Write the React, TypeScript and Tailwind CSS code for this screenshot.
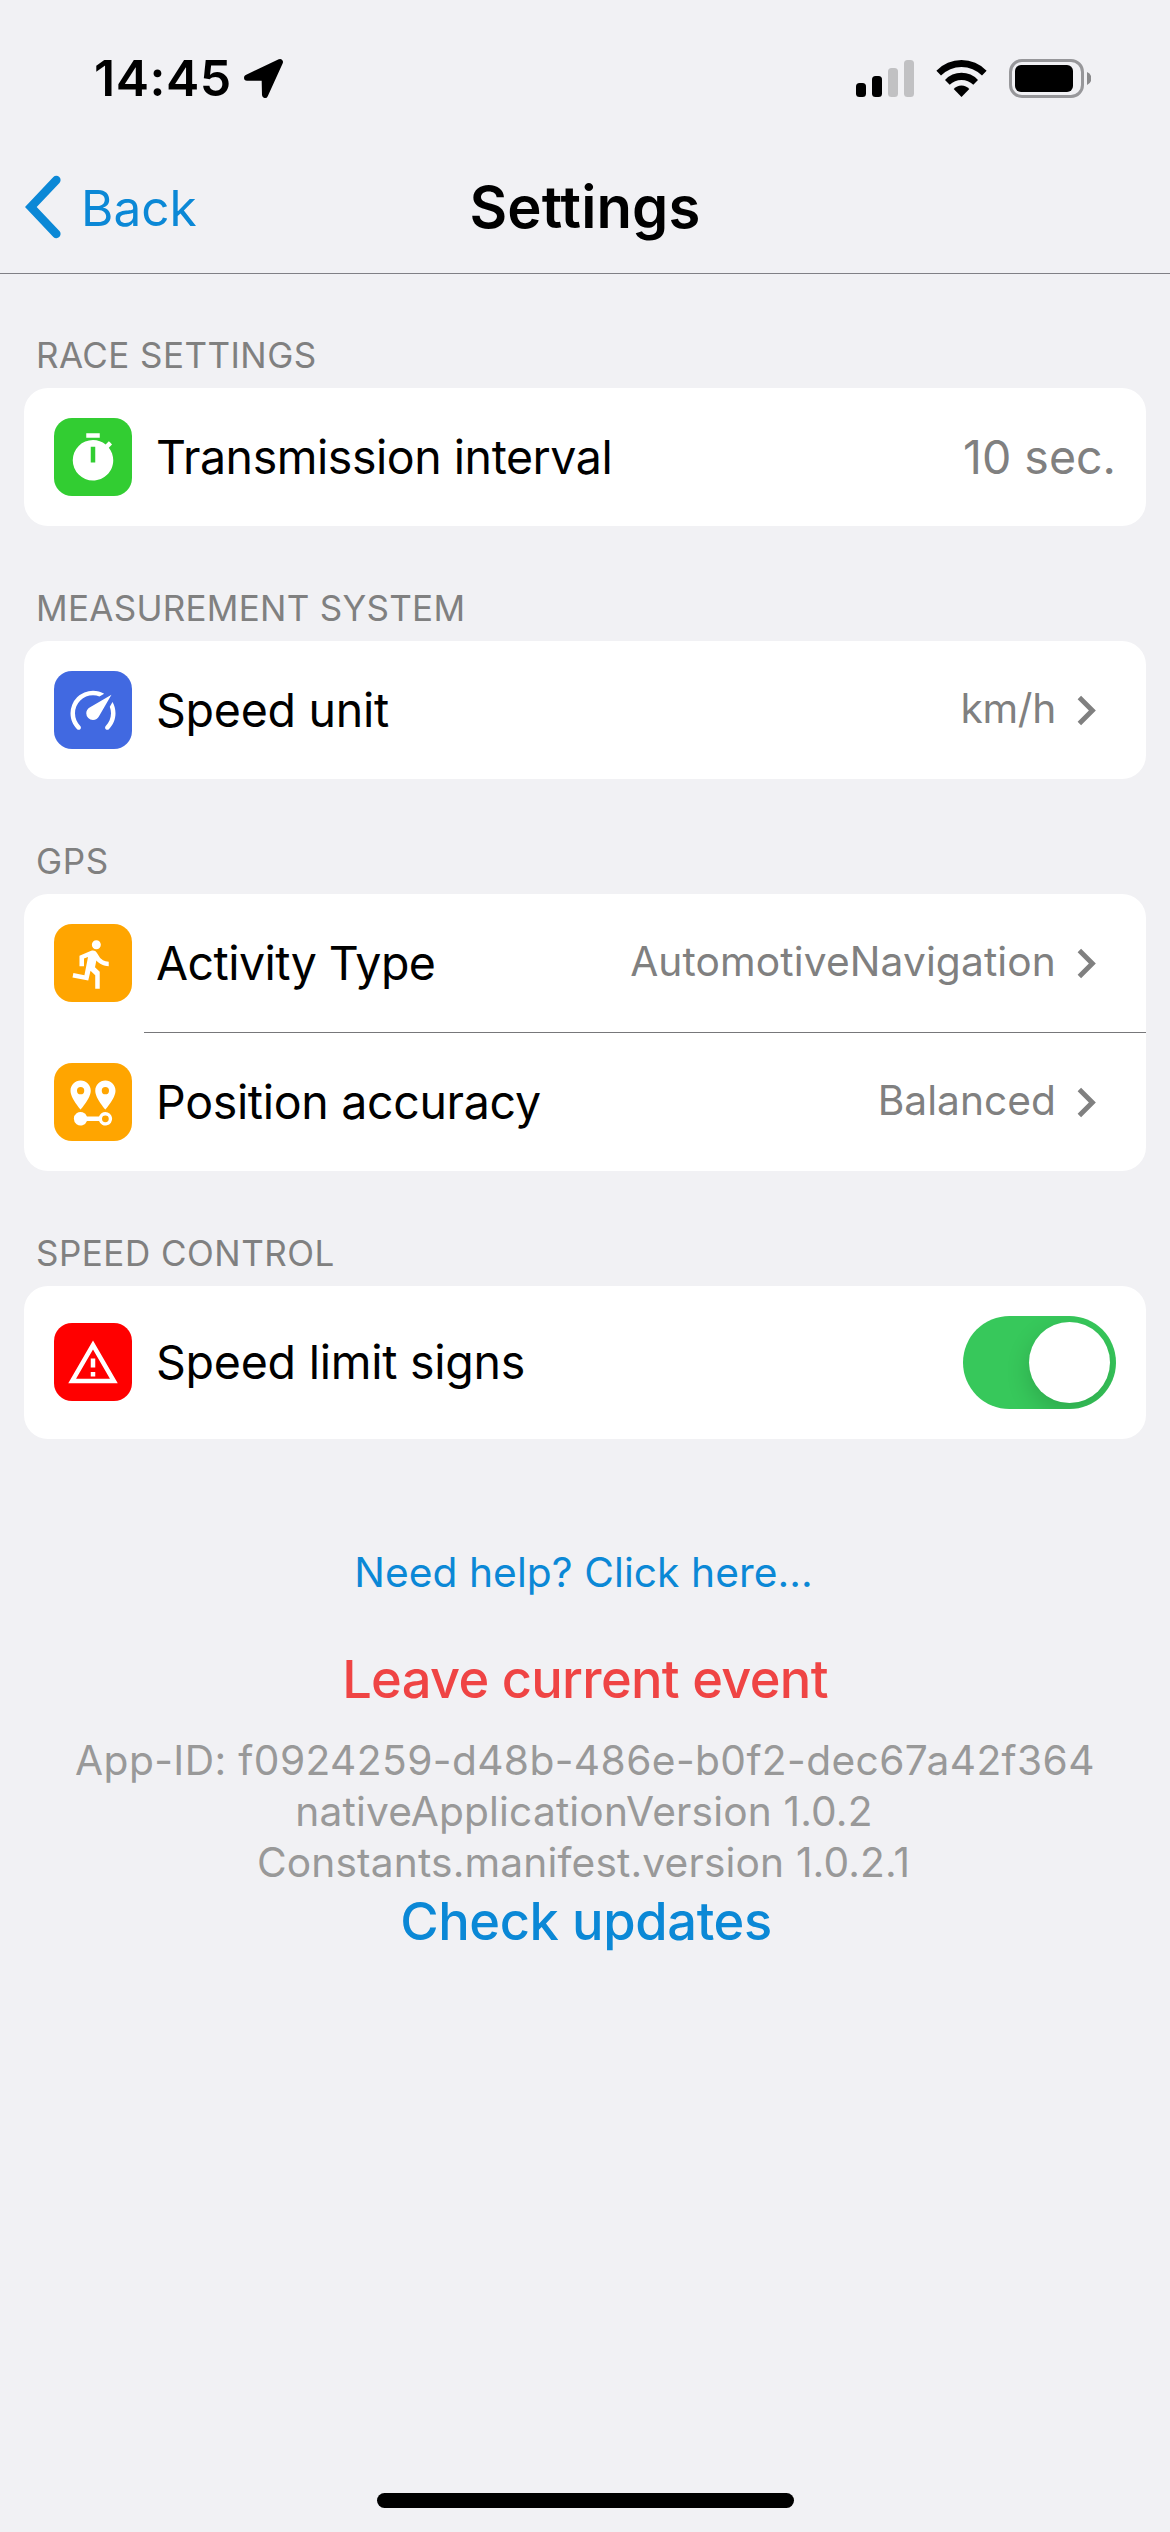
import React, { useState } from 'react';

const ICONS = {
  timer:
    'M19.03,7.39L20.45,5.97C20,5.46 19.55,5 19.04,4.56L17.62,6C16.07,4.74 14.12,4 12,4A9,9 0 0,0 3,13A9,9 0 0,0 12,22C17,22 21,17.97 21,13C21,10.88 20.26,8.93 19.03,7.39M13,14H11V7H13M15,1H9V3H15V1Z',
  speedometer:
    'M12,16A3,3 0 0,1 9,13C9,11.88 9.61,10.9 10.5,10.39L20.21,4.77L14.68,14.35C14.18,15.33 13.17,16 12,16M12,3C13.81,3 15.5,3.5 16.97,4.32L14.87,5.53C14,5.19 13,5 12,5A8,8 0 0,0 4,13C4,15.21 4.89,17.21 6.34,18.65H6.35C6.74,19.04 6.74,19.67 6.35,20.06C5.96,20.45 5.32,20.45 4.93,20.07V20.07C3.12,18.26 2,15.76 2,13A10,10 0 0,1 12,3M22,13C22,15.76 20.88,18.26 19.07,20.07V20.07C18.68,20.45 18.05,20.45 17.66,20.06C17.27,19.67 17.27,19.04 17.66,18.65V18.65C19.11,17.2 20,15.21 20,13C20,12 19.81,11 19.46,10.1L20.67,8C21.5,9.5 22,11.18 22,13Z',
  run: 'M13.49,5.48C14.59,5.48 15.49,4.58 15.49,3.48C15.49,2.38 14.59,1.48 13.49,1.48C12.39,1.48 11.49,2.38 11.49,3.48C11.49,4.58 12.39,5.48 13.49,5.48M9.89,19.38L10.89,14.98L12.99,16.98V22.98H14.99V15.48L12.89,13.48L13.49,10.48C14.79,11.98 16.79,12.98 18.99,12.98V10.98C17.09,10.98 15.49,9.98 14.69,8.58L13.69,6.98C13.29,6.38 12.69,5.98 11.99,5.98C11.69,5.98 11.49,6.08 11.19,6.08L5.99,8.28V12.98H7.99V9.58L9.79,8.88L8.19,16.98L3.29,15.98L2.89,17.98L9.89,19.38Z',
  distance:
    'M6.5,8.11A1.61,1.61 0 1,1 6.5,4.89A1.61,1.61 0 1,1 6.5,8.11M6.5,2C4,2 2,4 2,6.5C2,9.87 6.5,14.86 6.5,14.86C6.5,14.86 11,9.87 11,6.5C11,4 9,2 6.5,2M17.5,8.11A1.61,1.61 0 1,1 17.5,4.89A1.61,1.61 0 1,1 17.5,8.11M17.5,2C15,2 13,4 13,6.5C13,9.87 17.5,14.86 17.5,14.86C17.5,14.86 22,9.87 22,6.5C22,4 20,2 17.5,2M17.5,16C16.23,16 15.1,16.8 14.68,18H9.32A3,3 0 1,0 9.32,20H14.68A3,3 0 1,0 17.5,16M17.5,20.5A1.5,1.5 0 1,1 17.5,17.5A1.5,1.5 0 1,1 17.5,20.5Z',
  warning:
    'M12,2L1,21H23M12,6L19.53,19H4.47M11,10V14H13V10M11,16V18H13V16',
};

function Tile({ icon, color }: { icon: keyof typeof ICONS; color: string }) {
  return (
    <span className={`flex size-[78px] shrink-0 items-center justify-center rounded-[18px] pt-px ${color}`}>
      <svg viewBox="0 0 24 24" className="size-[54px]" fill="#fff" fillRule="evenodd">
        <path d={ICONS[icon]} />
      </svg>
    </span>
  );
}

function Row({
  icon,
  color,
  label,
  spacing,
  height = 'h-[138px]',
  children,
}: {
  icon: keyof typeof ICONS;
  color: string;
  label: string;
  spacing: string;
  height?: string;
  children: React.ReactNode;
}) {
  return (
    <div className={`flex items-center pr-[30px] pl-[30px] ${height}`}>
      <Tile icon={icon} color={color} />
      <span className={`ml-6 flex-1 text-[46.5px] leading-[60px] whitespace-nowrap text-black ${spacing}`}>{label}</span>
      {children}
    </div>
  );
}

function Link({ value, spacing }: { value: string; spacing: string }) {
  return (
    <span className="flex items-center text-[#808080]">
      <span className={`pb-[2px] text-[40.7px] leading-[50px] whitespace-nowrap ${spacing}`}>{value}</span>
      <svg viewBox="0 0 24 24" className="size-[60px] pt-px" fill="currentColor">
        <path d="M8.59,16.58L13.17,12L8.59,7.41L10,6L16,12L10,18L8.59,16.58Z" />
      </svg>
    </span>
  );
}

function Section({ title, spacing, children }: { title: string; spacing: string; children: React.ReactNode }) {
  return (
    <section className="mt-16 px-6">
      <h2 className={`pl-3 text-[35px] leading-9 text-[#808080] ${spacing}`}>{title}</h2>
      <div className="mt-[15px] overflow-hidden rounded-[24px] bg-white">{children}</div>
    </section>
  );
}

function StatusBar() {
  return (
    <div className="flex h-[141px] items-center justify-between pt-[15px] pr-[79px] pl-[94px]">
      <div className="flex items-center">
        <span className="text-[50px] leading-[60px] font-semibold tracking-[0.5px]">14:45</span>
        <svg viewBox="0 0 39 39" className="ml-[12px] h-[39px] w-[39px] overflow-visible">
          <path d="M3 18.7 36 3 21 36 20.6 18.7Z" stroke="#000" strokeWidth="6" strokeLinejoin="round" />
        </svg>
      </div>
      <div className="flex items-center">
        <div className="flex h-[37px] items-end gap-[6px]">
          <i className="h-[14px] w-[10px] rounded-[3.5px] bg-black" />
          <i className="h-[21px] w-[10px] rounded-[3.5px] bg-black" />
          <i className="h-[29px] w-[10px] rounded-[3.5px] bg-[#c1c1c3]" />
          <i className="h-[37px] w-[10px] rounded-[3.5px] bg-[#c1c1c3]" />
        </div>
        <svg viewBox="0 0 51 39" className="ml-[22px] h-[39px] w-[51px]">
          <path d="M.4 11.7A34.8 34.8 0 0 1 50.6 11.7L46 16.6A29 29 0 0 0 5 16.6Z" />
          <path d="M9 21A22.3 22.3 0 0 1 42 21L37.3 25.8A17.2 17.2 0 0 0 13.7 25.8Z" />
          <path d="M17.7 30A10.4 10.4 0 0 1 33.3 30L25.5 38Z" />
        </svg>
        <div className="ml-[22px] flex h-[39px] w-[75px] rounded-[13px] border-[3px] border-[#97979a] p-[3px]">
          <div className="w-[58px] rounded-[6px] bg-black" />
        </div>
        <svg viewBox="0 0 4 13" className="ml-[3px] h-[13px] w-1" fill="#8a8a8c">
          <path d="M0 0A7 7 0 0 1 0 13Z" />
        </svg>
      </div>
    </div>
  );
}

export default function App() {
  const [signs, setSigns] = useState(true);
  return (
    <div className="flex h-[2532px] w-[1170px] flex-col overflow-hidden bg-[#f1f1f4] font-[Inter,sans-serif] text-black">
      <StatusBar />
      <header className="-mb-px grid h-[133px] grid-cols-[1fr_auto_1fr] items-center border-b border-[#808085]">
        <a className="flex items-center pl-6 text-[#0b88d6]">
          <svg viewBox="0 0 38 64" className="h-16 w-[38px]" fill="none" stroke="currentColor" strokeWidth="8.4">
            <path d="M32.4 5 6.8 32 32.4 59" strokeLinecap="round" />
          </svg>
          <span className="ml-[19px] pt-[2px] text-[49.5px] leading-[60px]">Back</span>
        </a>
        <h1 className="text-[58px] leading-[70px] font-semibold tracking-[0.13px]">Settings</h1>
      </header>

      <Section title="RACE SETTINGS" spacing="tracking-[0.435px]">
        <Row icon="timer" color="bg-[#32cd32]" label="Transmission interval" spacing="tracking-[-0.46px]">
          <span className="text-[46.5px] leading-[60px] text-[#808080]">10 sec.</span>
        </Row>
      </Section>

      <Section title="MEASUREMENT SYSTEM" spacing="tracking-[0.28px]">
        <Row icon="speedometer" color="bg-[#4169e1]" label="Speed unit" spacing="tracking-[-0.25px]">
          <Link value="km/h" spacing="tracking-[-0.3px]" />
        </Row>
      </Section>

      <Section title="GPS" spacing="tracking-[0.6px]">
        <Row icon="run" color="bg-[#ffa500]" label="Activity Type" spacing="tracking-[-0.56px]">
          <Link value="AutomotiveNavigation" spacing="tracking-[0.12px]" />
        </Row>
        <hr className="ml-[120px] border-t border-[#77777a]" />
        <Row icon="distance" color="bg-[#ffa500]" label="Position accuracy" spacing="tracking-[-0.32px]">
          <Link value="Balanced" spacing="tracking-[0.03px]" />
        </Row>
      </Section>

      <Section title="SPEED CONTROL" spacing="tracking-[0.5px]">
        <Row icon="warning" color="bg-[#ff0000]" label="Speed limit signs" spacing="tracking-[-0.24px]" height="h-[153px] pb-px">
          <button
            role="switch"
            aria-checked={signs}
            aria-label="Speed limit signs"
            onClick={() => setSigns(!signs)}
            className={`mt-px flex h-[93px] w-[153px] items-center overflow-hidden rounded-full px-[6px] ${signs ? 'justify-end bg-[#37c85b]' : 'bg-[#e9e9ea]'}`}
          >
            <span className="size-[81px] rounded-full bg-white shadow-[0_9px_24px_rgba(0,0,0,0.16)]" />
          </button>
        </Row>
      </Section>

      <footer className="mt-[108px] flex flex-col items-center text-center text-[40.7px] leading-[51px] whitespace-nowrap text-[#999999]">
        <a className="pr-[3px] tracking-[0.07px] text-[#0b88d6]">Need help? Click here...</a>
        <a className="mt-[49px] text-[52.4px] leading-[64px] font-medium tracking-[-0.69px] text-[#ef4444]">Leave current event</a>
        <p className="mt-6 tracking-[0.4px]">App-ID: f0924259-d48b-486e-b0f2-dec67a42f364</p>
        <p className="pr-[2px] tracking-[0.15px]">nativeApplicationVersion 1.0.2</p>
        <p className="pr-[3px] tracking-[0.15px]">Constants.manifest.version 1.0.2.1</p>
        <a className="pl-[2px] text-[52.4px] leading-[66px] font-medium tracking-[-0.38px] text-[#0b88d6]">Check updates</a>
      </footer>

      <div className="mx-auto mt-auto mb-6 h-[15px] w-[417px] rounded-full bg-black" />
    </div>
  );
}
